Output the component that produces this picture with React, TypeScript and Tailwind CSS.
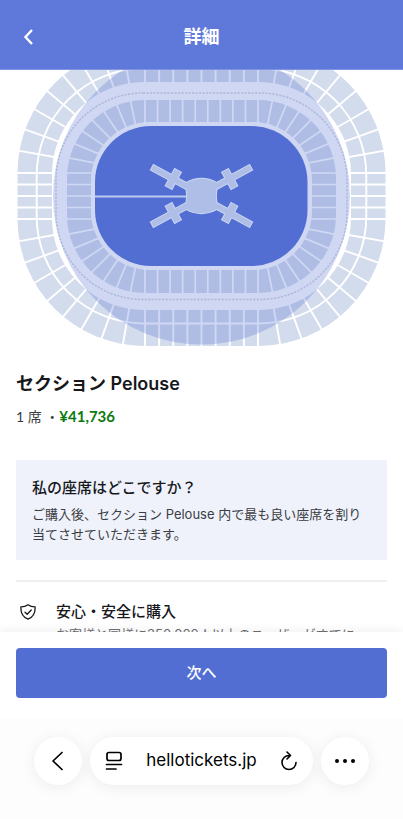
import React from 'react';

// Corner centres of the stands: every row bends around one of these
const LEFT = 145;
const RIGHT = 258;
const TOP = 173;
const BOTTOM = 219;

interface StandProps {
  from: number;
  to: number;
  corner: number;
  across: number;
  down: number;
}

const aisles = ({ from, to, corner, across, down }: StandProps) => {
  const parts: string[] = [];
  for (let i = 0; i <= across; i++) {
    const x = LEFT + ((RIGHT - LEFT) * i) / across;
    parts.push(`M${x} ${TOP - from}V${TOP - to}M${x} ${BOTTOM + from}V${BOTTOM + to}`);
  }
  for (let i = 0; i <= down; i++) {
    const y = TOP + ((BOTTOM - TOP) * i) / down;
    parts.push(`M${LEFT - from} ${y}H${LEFT - to}M${RIGHT + from} ${y}H${RIGHT + to}`);
  }
  for (let i = 1; i < corner; i++) {
    const a = (Math.PI / 2) * (i / corner);
    const c = Math.cos(a);
    const s = Math.sin(a);
    [[LEFT, TOP, -1, -1], [RIGHT, TOP, 1, -1], [LEFT, BOTTOM, -1, 1], [RIGHT, BOTTOM, 1, 1]].forEach(([x, y, dx, dy]) => {
      parts.push(`M${x + dx * c * from} ${y + dy * s * from}L${x + dx * c * to} ${y + dy * s * to}`);
    });
  }
  return parts.join('');
};

const ARMS = [
  'translate(173.3 179) rotate(28.5)',
  'translate(229.7 179) scale(-1 1) rotate(28.5)',
  'translate(173.3 213) scale(1 -1) rotate(28.5)',
  'translate(229.7 213) scale(-1 -1) rotate(28.5)',
];

const StageShape: React.FC = () => (
  <>
    {ARMS.map(t => (
      <path key={t} transform={t} d="M-24-2.8H16V2.8H-24ZM-3.5-9.5H3.500V9.500H-3.500Z" />
    ))}
    <path d="M186 183Q201.5 174.500 217 183L216 196L217 209Q201.5 217.500 186 209L187 196Z" />
  </>
);

const StadiumMap: React.FC = () => (
  <svg viewBox="0 70 403 280" className="block w-full" role="img" aria-label="Pelouse">
    <rect x="17.500" y="46" width="368" height="300" rx="127" fill="#d3dcec" />
    <path d={aisles({ from: 88, to: 130, corner: 9, across: 8, down: 4 })} stroke="#fff" strokeWidth="1.900" />
    <rect x="36.700" y="68.500" width="329.600" height="255" rx="107" fill="none" stroke="#fff" strokeWidth="1.900" />
    <rect x="52" y="82" width="299" height="228" rx="92" fill="#fff" />
    <rect x="67" y="100" width="269" height="193" rx="78" fill="#d3dcec" />
    <path d={aisles({ from: 48, to: 80, corner: 8, across: 9, down: 4 })} stroke="#fff" strokeWidth="1.700" />
    <rect x="91" y="122" width="221" height="148" rx="59" fill="#fff" />
    <circle cx="201.500" cy="196" r="148.500" fill="#526ed3" fillOpacity="0.28" />
    <rect x="56" y="93" width="291" height="206.500" rx="87" fill="none" stroke="#9ca9cd" strokeOpacity="0.65" strokeWidth="1.500" strokeDasharray="2.200 1.300" />
    <rect x="95" y="126" width="212.500" height="140" rx="56" fill="#526ed3" />
    <path d="M95 196.500H187" stroke="#bdc9ef" strokeWidth="2" />
    <g fill="none" stroke="#cdd6f5" strokeWidth="1.800">
      <StageShape />
    </g>
    <g fill="#aebee6">
      <StageShape />
    </g>
  </svg>
);

const App: React.FC = () => (
  <div className="flex h-screen flex-col overflow-hidden bg-white font-[Inter,'Noto_Sans_CJK_JP',sans-serif] text-[#17181c]">
    <header className="grid h-[70px] shrink-0 grid-cols-[40px_1fr_40px] items-center border-b border-[#7f95e4] bg-[#5f79db] px-2 pt-1 text-white">
      <button aria-label="戻る" className="flex h-10 items-center justify-center">
        <svg width="10" height="16" viewBox="0 0 10 16" fill="none" stroke="currentColor" strokeWidth="2.400">
          <path d="M9 1L2.500 8L9 15" />
        </svg>
      </button>
      <h1 className="text-center text-lg font-bold">詳細</h1>
    </header>

    <main className="min-h-0 flex-1 overflow-y-auto [scrollbar-width:none]">
      <StadiumMap />
      <div className="px-4 pt-5">
        <h2 className="text-lg leading-7 font-semibold">セクション Pelouse</h2>
        <p className="mt-1 font-[Lato,'Noto_Sans_CJK_JP',sans-serif] text-sm leading-7 text-[#3b3d42]">
          1 席 ・<span className="text-[15px] font-bold text-[#0c7a12]">¥41,736</span>
        </p>

        <section className="mt-[29px] bg-[#eff2fb] p-4">
          <h3 className="text-[15px] leading-6 font-medium">私の座席はどこですか？</h3>
          <p className="mt-1 text-[13px] leading-5 text-[#3b3d42]">
            ご購入後、セクション Pelouse 内で最も良い座席を割り当てさせていただきます。
          </p>
        </section>

        <section className="mt-5 flex gap-5 border-t-2 border-[#f0f0f2] pt-[18px]">
          <svg width="16" height="16" viewBox="0 0 16 16" fill="none" stroke="currentColor" strokeWidth="1.300" strokeLinecap="round" strokeLinejoin="round" className="mt-1 ml-1 shrink-0">
            <path d="M8 0.800C6 2.300 3.500 2.900 0.900 2.900C0.600 8.500 2.300 13 8 15.200C13.700 13 15.400 8.500 15.100 2.900C12.500 2.900 10 2.300 8 0.800Z" />
            <path d="M5 8.200L7.200 10.200L11.200 6" />
          </svg>
          <div>
            <h3 className="text-[15px] leading-6 font-medium">安心・安全に購入</h3>
            <p className="text-[13px] leading-5 text-[#6b6d72]">お客様と同様に350,000人以上のユーザーがすでに</p>
          </div>
        </section>
      </div>
    </main>

    <div className="z-10 shrink-0 bg-white px-4 pt-4 pb-5 shadow-[0_-2px_8px_rgba(0,0,0,0.06)]">
      <button className="h-[50px] w-full rounded bg-[#526ed3] text-[15px] font-medium text-white">次へ</button>
    </div>

    <nav className="z-10 flex h-[101px] shrink-0 items-start justify-center gap-2 bg-[#fdfdfd] px-[34px] pt-[19px] text-black">
      <button aria-label="前のページ" className="flex size-12 shrink-0 items-center justify-center rounded-full bg-white shadow-[0_2px_16px_rgba(0,0,0,0.07)]">
        <svg width="12" height="20" viewBox="0 0 12 20" fill="none" stroke="currentColor" strokeWidth="1.700" strokeLinecap="round" strokeLinejoin="round">
          <path d="M10 1.500L1 10L10 18.500" />
        </svg>
      </button>
      <div className="flex h-12 flex-1 items-center justify-between rounded-full bg-white px-[15px] shadow-[0_2px_16px_rgba(0,0,0,0.07)]">
        <button aria-label="ページメニュー">
          <svg width="18" height="20" viewBox="0 0 18 20" fill="none" stroke="currentColor" strokeWidth="1.700" strokeLinecap="round">
            <rect x="2" y="1.500" width="14" height="8" rx="2" />
            <path d="M1.500 13.500H16.500M1.500 18H11" />
          </svg>
        </button>
        <a href="#" className="text-[17px]">hellotickets.jp</a>
        <button aria-label="再読み込み">
          <svg width="18" height="20" viewBox="0 0 18 20" fill="none" stroke="currentColor" strokeWidth="1.600" strokeLinecap="round" strokeLinejoin="round">
            <path d="M9 4.500A7 7 0 1 0 16 11.500M7 1L10.500 4.500L7 8" />
          </svg>
        </button>
      </div>
      <button aria-label="その他" className="flex size-12 shrink-0 items-center justify-center rounded-full bg-white shadow-[0_2px_16px_rgba(0,0,0,0.07)]">
        <svg width="20" height="4" viewBox="0 0 20 4" fill="currentColor">
          <circle cx="2" cy="2" r="2" />
          <circle cx="10" cy="2" r="2" />
          <circle cx="18" cy="2" r="2" />
        </svg>
      </button>
    </nav>
  </div>
);

export default App;
